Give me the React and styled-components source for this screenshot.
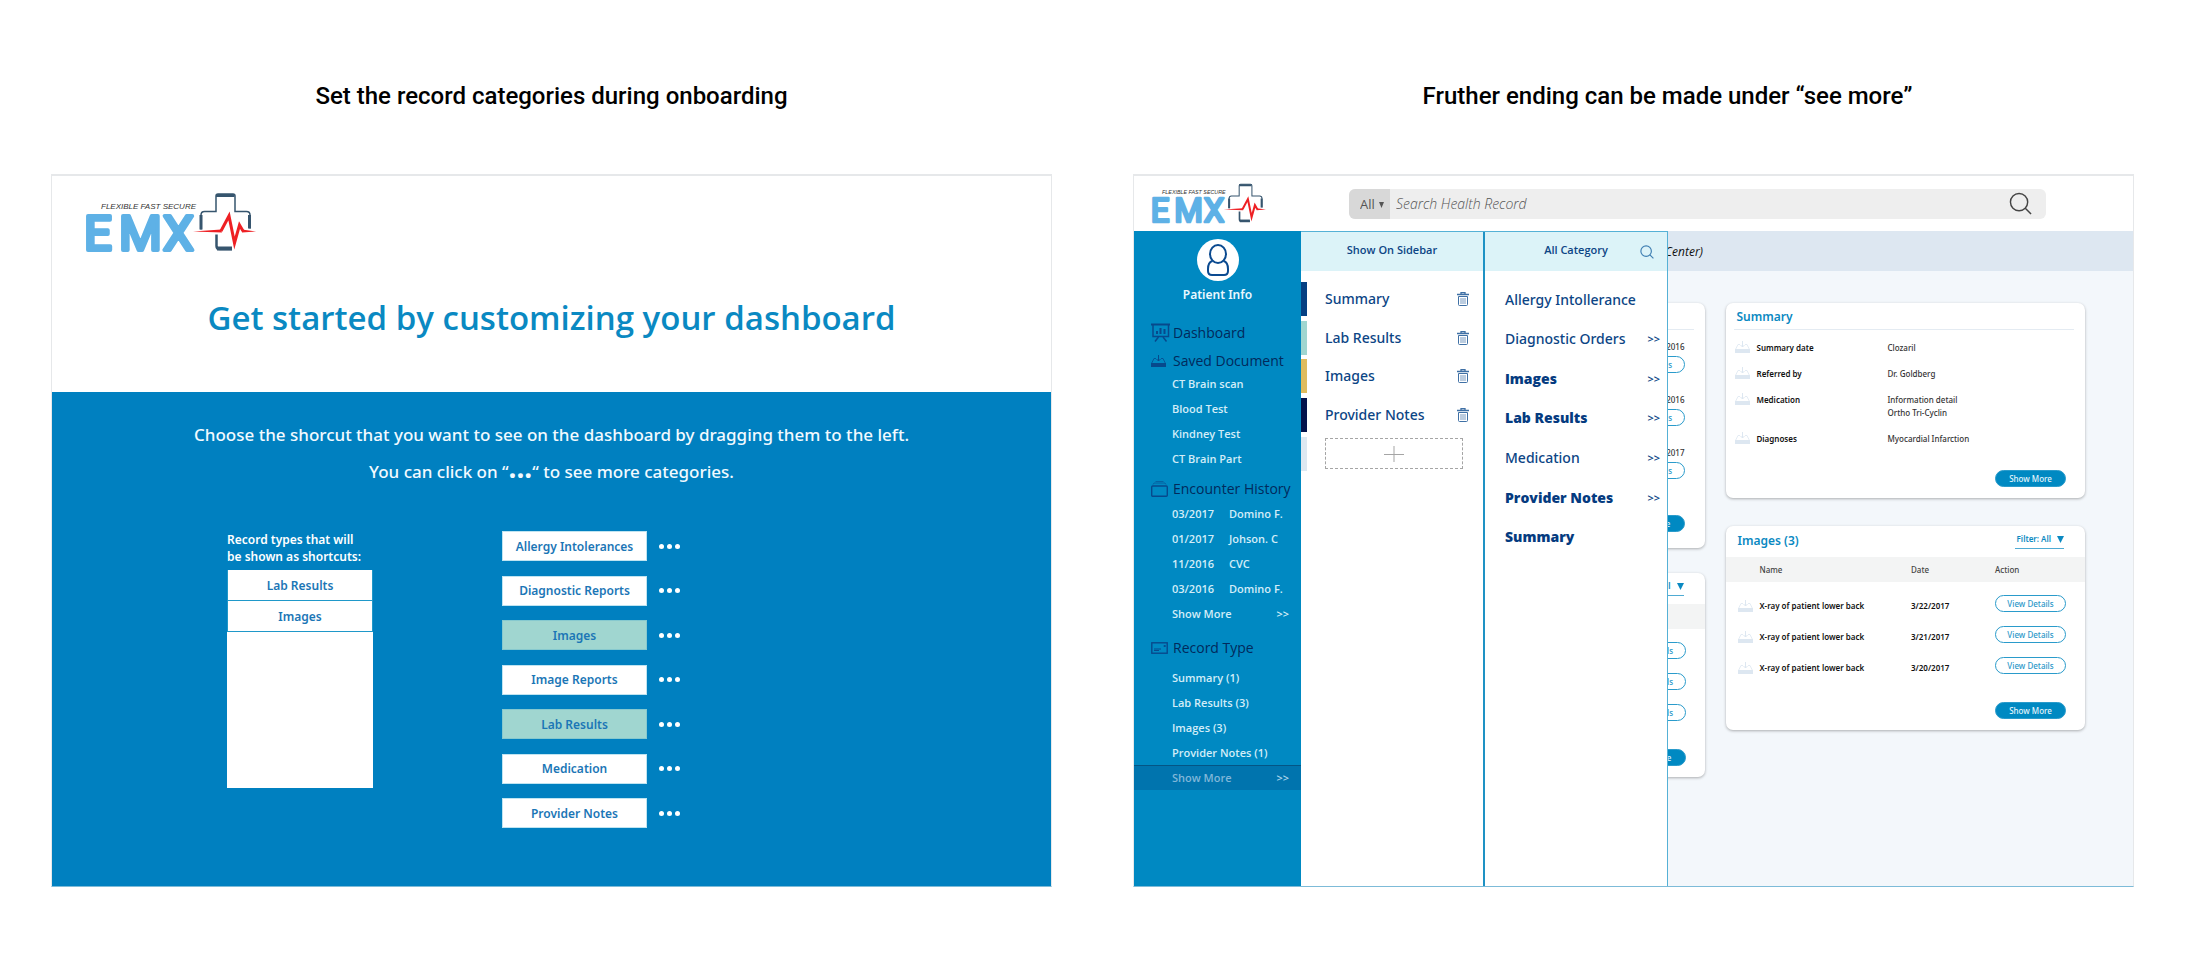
import React from "react";
import styled, { createGlobalStyle, css } from "styled-components";

const sans = `"Noto Sans", "Open Sans", sans-serif`;
const openSans = `"Open Sans", "Noto Sans", sans-serif`;

const color = {
  blue: "#0080c0",
  sidebar: "#0089c2",
  title: "#0a89c2",
  label: "#1b76b6",
  navy: "#0c4585",
  deepNavy: "#022a5c",
  mint: "#a0d6d0",
  ice: "#dcf3f8",
};

const GlobalStyle = createGlobalStyle`
  *, *::before, *::after { box-sizing: border-box; }
  body { margin: 0; background: #fff; font-family: ${sans}; color: #222; }
  h1, h2, h3, p, ul, dl, dd { margin: 0; padding: 0; }
  ul { list-style: none; }
  button, input, select { font: inherit; color: inherit; border: 0; margin: 0; padding: 0; background: none; }
  button { cursor: pointer; }
  a { color: inherit; text-decoration: none; }
  svg { display: block; }
`;

const Page = styled.main`
  display: grid;
  grid-template-columns: 1fr 1fr;
  gap: 81px;
  padding: 81px 63px 76px 51px;
`;

const Story = styled.section`
  display: flex;
  flex-direction: column;
  min-width: 0;
`;

const Caption = styled.h2`
  margin-bottom: 63px;
  padding-left: ${(p) => p.$indent || 0}px;
  font: 500 24px/30px Roboto, "Open Sans", sans-serif;
  color: #000;
  text-align: center;
`;

const Frame = styled.div`
  display: flex;
  flex-direction: column;
  flex: 1;
  border: 1px solid #e6e8ea;
  border-top-width: 2px;
  border-bottom-color: #7dbbd8;
`;

/* ---------- Logo ---------- */

const LogoSvg = styled.svg`
  width: ${(p) => p.$width}px;
  height: auto;
  flex: none;
  overflow: visible;
`;

function Logo({ width }) {
  return (
    <LogoSvg $width={width} viewBox="0 0 170 60" role="img" aria-label="EMX">
      <text x="15" y="17" fontFamily="Liberation Sans, sans-serif" fontStyle="italic" fontSize="8" fill="#333">
        FLEXIBLE FAST SECURE
      </text>
      <text
        x="-2 33 77"
        y="58"
        fontFamily="Roboto, sans-serif"
        fontSize="49"
        fill="#5eb1e6"
        stroke="#5eb1e6"
        strokeWidth="4"
        strokeLinejoin="round"
      >
        EMX
      </text>
      <g fill="none" stroke="#36556e">
        <path d="M115 37.500V23q0-3.500 3.500-3.500H130V4q0-2 2-2h15q2 0 2 2v15.500h11.500q3.500 0 3.500 3.500v13.500" strokeWidth="1.500" />
        <path d="M115 37.500V23M163.500 36.500V23M130 3.500h18.500" strokeWidth="3" />
        <path d="M130.500 42.500V54q0 3 3 3H146" strokeWidth="2.500" />
        <path d="M131 56.500h15" strokeWidth="4" />
      </g>
      <g fill="#ee2024">
        <path d="M107 39.500L135 37.500L136 40.500ZM156 37.500L170 39.500L156 40.500Z" />
        <path
          d="M135 39L143 24L148.500 51L153.500 33L157 39"
          fill="none"
          stroke="#ee2024"
          strokeWidth="3"
          strokeMiterlimit="8"
        />
      </g>
    </LogoSvg>
  );
}

/* ---------- Icons ---------- */

function SearchIcon({ size, weight }) {
  return (
    <svg width={size} height={size} viewBox="0 0 24 24" fill="none" stroke="currentColor" strokeWidth={weight}>
      <circle cx="10.500" cy="10.500" r="9" />
      <path d="M17 17L23 23" />
    </svg>
  );
}

function TrayIcon({ width = 15 }) {
  return (
    <svg width={width} height="12" viewBox="0 0 15 12" fill="none" stroke="currentColor">
      <path d="M.5 8.500L3 3.500H5M10 3.500H12L14.500 8.500" opacity=".8" />
      <path d="M7.500 0V6M5.500 4L7.500 6L9.500 4" />
      <path d="M0 8H15V12H0Z" fill="currentColor" stroke="none" />
    </svg>
  );
}

function TrashIcon() {
  return (
    <svg width="12" height="14" viewBox="0 0 12 14" fill="none" stroke="currentColor">
      <path d="M0 2.500H12M4 2V.5H8V2" strokeWidth="1.300" />
      <path d="M1.500 4.500V12.500Q1.500 13.500 2.500 13.500H9.500Q10.500 13.500 10.500 12.500V4.500Z" />
      <path d="M4 6V12M6 6V12M8 6V12" opacity=".7" />
    </svg>
  );
}

function PersonIcon() {
  return (
    <svg width="24" height="32" viewBox="0 0 24 32" fill="none" stroke="#0b4a90" strokeWidth="2">
      <path d="M6.500 17C3 18 2 21 2 25V27Q2 31 6 31H18Q22 31 22 27V25C22 21 21 18 17.500 17" />
      <ellipse cx="12" cy="10" rx="8" ry="9" />
    </svg>
  );
}

function BoardIcon() {
  return (
    <svg width="20" height="20" viewBox="0 0 20 20" fill="none" stroke="currentColor">
      <path d="M0 1.500H19" strokeWidth="2" />
      <path d="M2 2V13.500H17.500V2" strokeWidth="1.500" />
      <path d="M6 11V8M9.500 11V5M13.500 11V6" strokeWidth="2" />
      <path d="M7.500 14L4 18.500M12 14L15.500 18.500" strokeWidth="1.500" />
    </svg>
  );
}

function FolderIcon() {
  return (
    <svg width="17" height="16" viewBox="0 0 17 16" fill="none" stroke="currentColor">
      <rect x=".7" y="5" width="15.600" height="10.300" rx="1" strokeWidth="1.400" />
      <path d="M2 3.500L3 2H14L15 3.500M4.500 .5H12.500" opacity=".6" />
    </svg>
  );
}

function CardIcon() {
  return (
    <svg width="17" height="12" viewBox="0 0 17 12" fill="none" stroke="currentColor">
      <rect x=".8" y=".8" width="15.400" height="10.400" strokeWidth="1.400" />
      <path d="M3 7H10M3 8.500H8M12.500 4H15M13.700 3V5" />
    </svg>
  );
}

/* ---------- Onboarding ---------- */

const OnboardingHeader = styled.header`
  height: 216px;
  padding: 16px 34px 0;
`;

const OnboardingTitle = styled.h1`
  margin-top: 44px;
  font: 600 33px/44px ${openSans};
  color: ${color.title};
  text-align: center;
`;

const OnboardingBody = styled.div`
  flex: 1;
  padding: 24px 0 58px;
  background: ${color.blue};
  color: #fff;
`;

const Intro = styled.p`
  font: 500 17px/37px ${sans};
  color: #f2faff;
  text-align: center;
  b {
    font-size: 28px;
    line-height: 0;
  }
`;

const Picker = styled.div`
  display: flex;
  gap: 129px;
  margin-top: 41px;
  padding-left: 175px;
  font: 600 12px/17px ${sans};
`;

const ShortcutColumn = styled.div`
  width: 146px;
`;

const ShortcutLabel = styled.h3`
  margin-bottom: 5px;
  font: inherit;
  white-space: nowrap;
`;

const ShortcutBox = styled.ul`
  height: 218px;
  background: #fff;
`;

const Shortcut = styled.li`
  display: flex;
  align-items: center;
  justify-content: center;
  height: 31px;
  border: 1px solid #1f98c9;
  border-top: 0;
  color: ${color.label};
`;

const RecordList = styled.ul`
  display: flex;
  flex-direction: column;
  justify-content: space-between;
  height: 297px;
`;

const RecordItem = styled.li`
  display: flex;
  align-items: center;
  gap: 12px;
`;

const RecordButton = styled.button`
  width: 145px;
  height: 30px;
  border: 1px solid ${(p) => (p.$picked ? "#86c9cf" : "#bfe4f1")};
  background: ${(p) => (p.$picked ? color.mint : "#fff")};
  color: ${color.label};
`;

const MoreButton = styled.button`
  display: flex;
  gap: 3px;
  i {
    width: 5px;
    height: 5px;
    border-radius: 50%;
    background: #fff;
  }
`;

const records = [
  ["Allergy Intolerances"],
  ["Diagnostic Reports"],
  ["Images", true],
  ["Image Reports"],
  ["Lab Results", true],
  ["Medication"],
  ["Provider Notes"],
];

function Onboarding() {
  return (
    <Frame>
      <OnboardingHeader>
        <Logo width={170} />
        <OnboardingTitle>Get started by customizing your dashboard</OnboardingTitle>
      </OnboardingHeader>
      <OnboardingBody>
        <Intro>Choose the shorcut that you want to see on the dashboard by dragging them to the left.</Intro>
        <Intro>
          You can click on “<b>...</b>“ to see more categories.
        </Intro>
        <Picker>
          <ShortcutColumn>
            <ShortcutLabel>
              Record types that will
              <br />
              be shown as shortcuts:
            </ShortcutLabel>
            <ShortcutBox>
              <Shortcut>Lab Results</Shortcut>
              <Shortcut>Images</Shortcut>
            </ShortcutBox>
          </ShortcutColumn>
          <RecordList>
            {records.map(([name, picked]) => (
              <RecordItem key={name}>
                <RecordButton $picked={picked}>{name}</RecordButton>
                <MoreButton aria-label={`More ${name}`}>
                  <i />
                  <i />
                  <i />
                </MoreButton>
              </RecordItem>
            ))}
          </RecordList>
        </Picker>
      </OnboardingBody>
    </Frame>
  );
}

/* ---------- Dashboard: top bar ---------- */

const TopBar = styled.header`
  display: flex;
  align-items: center;
  gap: 83px;
  height: 55px;
  padding: 0 87px 0 18px;
`;

const SearchForm = styled.form`
  display: flex;
  align-items: center;
  flex: 1;
  height: 30px;
  border-radius: 6px;
  background: #eeeeee;
  overflow: hidden;
  color: #555;
`;

const Scope = styled.label`
  position: relative;
  width: 41px;
  height: 30px;
  background: #d8d8d8;
  select {
    appearance: none;
    width: 100%;
    height: 100%;
    padding-left: 11px;
    font: 400 13px ${openSans};
  }
  svg {
    position: absolute;
    right: 6px;
    top: 13px;
    pointer-events: none;
  }
`;

const SearchInput = styled.input`
  flex: 1;
  min-width: 0;
  padding-left: 6px;
  font: italic 300 14px ${openSans};
  &::placeholder {
    color: #555;
    opacity: 1;
  }
`;

const SearchButton = styled.button`
  margin-right: 14px;
  color: #444;
`;

/* ---------- Dashboard: sidebar ---------- */

const Workspace = styled.div`
  display: grid;
  grid-template-columns: 167px 1fr;
  flex: 1;
`;

const Sidebar = styled.nav`
  padding-top: 8px;
  background: ${color.sidebar};
  color: #d3edf8;
`;

const Patient = styled.a`
  display: flex;
  flex-direction: column;
  align-items: center;
  gap: 5px;
  margin-bottom: 19px;
  font: 600 12px/18px ${sans};
  color: #eaf8ff;
`;

const Avatar = styled.span`
  display: grid;
  place-items: center;
  width: 42px;
  height: 42px;
  border-radius: 50%;
  background: #fff;
`;

const NavHeading = styled.h3`
  display: grid;
  grid-template-columns: 20px auto;
  align-items: center;
  gap: 2px;
  margin-top: ${(p) => p.$top || 0}px;
  margin-bottom: ${(p) => p.$bottom || 0}px;
  padding-left: 17px;
  font: 400 14px/20px ${openSans};
  color: ${color.deepNavy};
  white-space: nowrap;
  svg {
    color: #07498c;
  }
`;

const NavItem = styled.a`
  display: flex;
  height: 25px;
  padding: 0 12px 0 38px;
  font: 600 11px/25px ${openSans};
  white-space: nowrap;
  ${(p) =>
    p.$active &&
    css`
      background: #0074ae;
      box-shadow: inset 0 1px #045585;
      color: #80b7d9;
    `}
`;

const VisitDate = styled.span`
  width: 57px;
`;

const Chevrons = styled.span`
  margin-left: auto;
  font-family: ${sans};
  font-size: 11px;
  font-weight: 600;
  color: ${(p) => p.$tone || "inherit"};
`;

const savedDocuments = ["CT Brain scan", "Blood Test", "Kindney Test", "CT Brain Part"];
const encounters = [
  ["03/2017", "Domino F."],
  ["01/2017", "Johson. C"],
  ["11/2016", "CVC"],
  ["03/2016", "Domino F."],
];
const recordTypes = ["Summary (1)", "Lab Results (3)", "Images (3)", "Provider Notes (1)"];

function SideNav() {
  return (
    <Sidebar>
      <Patient href="#patient">
        <Avatar>
          <PersonIcon />
        </Avatar>
        Patient Info
      </Patient>
      <NavHeading>
        <BoardIcon />
        Dashboard
      </NavHeading>
      <NavHeading $top={8}>
        <TrayIcon />
        Saved Document
      </NavHeading>
      {savedDocuments.map((name) => (
        <NavItem key={name} href="#document">
          {name}
        </NavItem>
      ))}
      <NavHeading $top={8} $bottom={2}>
        <FolderIcon />
        Encounter History
      </NavHeading>
      {encounters.map(([date, name]) => (
        <NavItem key={date} href="#encounter">
          <VisitDate>{date}</VisitDate>
          {name}
        </NavItem>
      ))}
      <NavItem href="#encounters">
        Show More <Chevrons>&gt;&gt;</Chevrons>
      </NavItem>
      <NavHeading $top={12} $bottom={7}>
        <CardIcon />
        Record Type
      </NavHeading>
      {recordTypes.map((name) => (
        <NavItem key={name} href="#record">
          {name}
        </NavItem>
      ))}
      <NavItem href="#records" $active>
        Show More <Chevrons $tone="#a9d3ea">&gt;&gt;</Chevrons>
      </NavItem>
    </Sidebar>
  );
}

/* ---------- Dashboard: category flyout ---------- */

const Flyout = styled.div`
  position: absolute;
  inset: 0 auto 0 0;
  display: grid;
  grid-template-columns: 184px 182px;
  border: 1px solid #55b1d6;
  border-left: 0;
  border-bottom: 0;
  background: #fff;
  color: ${color.navy};
`;

const Panel = styled.section`
  & + & {
    border: 0;
  }
  border-right: 2px solid #1e92c4;
`;

const PanelHeader = styled.header`
  display: grid;
  grid-template-columns: 1fr auto 1fr;
  align-items: center;
  height: 39px;
  padding: 0 13px;
  background: ${color.ice};
  h3 {
    grid-column: 2;
    font: 600 11px/16px ${openSans};
    padding-bottom: 3px;
  }
  button {
    justify-self: end;
    color: #3f7fb2;
  }
`;

const PanelList = styled.ul`
  display: grid;
  grid-auto-rows: 1fr;
  height: ${(p) => p.$height}px;
  margin-top: 9px;
`;

const ShownRow = styled.li`
  display: grid;
  grid-template-columns: 6px 1fr auto;
  align-items: center;
  gap: 18px;
  padding-right: 13px;
  font: 500 14px/20px ${sans};
  button {
    color: #3f70a5;
  }
`;

const Stripe = styled.span`
  height: 34px;
  background: ${(p) => p.$fill};
`;

const RemoveButton = styled.button`
  margin-right: 12px;
`;

const AddSlot = styled.button`
  display: grid;
  place-items: center;
  width: 138px;
  height: 31px;
  border: 1px dashed #a5a5a5;
`;

const CategoryRow = styled.li`
  display: flex;
  align-items: center;
  padding: 0 7px 0 20px;
  font: 500 14px/20px ${sans};
  white-space: nowrap;
  ${(p) =>
    p.$strong &&
    css`
      font: 800 14px/20px ${openSans};
      color: #053b80;
    `}
`;

const shown = [
  ["Summary", "#053f82"],
  ["Lab Results", color.mint],
  ["Images", "#dfbc5e"],
  ["Provider Notes", "#02124a"],
];

const categories = [
  { name: "Allergy Intollerance" },
  { name: "Diagnostic Orders", more: true },
  { name: "Images", more: true, strong: true },
  { name: "Lab Results", more: true, strong: true },
  { name: "Medication", more: true },
  { name: "Provider Notes", more: true, strong: true },
  { name: "Summary", strong: true },
];

function CategoryFlyout() {
  return (
    <Flyout>
      <Panel>
        <PanelHeader>
          <h3>Show On Sidebar</h3>
        </PanelHeader>
        <PanelList $height={193}>
          {shown.map(([name, fill]) => (
            <ShownRow key={name}>
              <Stripe $fill={fill} />
              {name}
              <RemoveButton aria-label={`Remove ${name}`}>
                <TrashIcon />
              </RemoveButton>
            </ShownRow>
          ))}
          <ShownRow>
            <Stripe $fill="#dde8f1" />
            <AddSlot aria-label="Add category">
              <svg width="20" height="16" viewBox="0 0 20 16" stroke="#a5a5a5">
                <path d="M0 8.500H20M10 0V16" />
              </svg>
            </AddSlot>
          </ShownRow>
        </PanelList>
      </Panel>
      <Panel>
        <PanelHeader>
          <h3>All Category</h3>
          <button aria-label="Search categories">
            <SearchIcon size={14} weight={2} />
          </button>
        </PanelHeader>
        <PanelList $height={277}>
          {categories.map((c) => (
            <CategoryRow key={c.name} $strong={c.strong}>
              {c.name}
              {c.more && <Chevrons $tone={color.navy}>&gt;&gt;</Chevrons>}
            </CategoryRow>
          ))}
        </PanelList>
      </Panel>
    </Flyout>
  );
}

/* ---------- Dashboard: cards ---------- */

const Content = styled.div`
  position: relative;
  background: #f3f7fb;
  min-width: 0;
`;

const LocationBar = styled.p`
  height: 40px;
  padding-left: 364px;
  background: #dde7f1;
  font: italic 400 12px/41px ${openSans};
  color: #111;
`;

const Board = styled.div`
  display: grid;
  grid-template-columns: 1fr 1fr;
  gap: 21px;
  padding: 32px 48px 32px 44px;
`;

const Column = styled.div`
  display: flex;
  flex-direction: column;
  gap: ${(p) => p.$gap}px;
`;

const Card = styled.article`
  border-radius: 7px;
  background: #fff;
  box-shadow: 0 1px 3px rgba(0, 0, 0, 0.3);
  font: 500 8px/13px ${sans};
  color: #333;
`;

const CardTitle = styled.h3`
  font: 600 12px/18px ${sans};
  color: ${color.title};
`;

const RuledHeader = styled.header`
  display: flex;
  align-items: center;
  height: 27px;
  margin: 0 11px 0 8px;
  padding: 2px 0 0 3px;
  border-bottom: 1px solid #e4ebf2;
`;

const Pill = styled.button`
  display: block;
  width: 71px;
  height: 17px;
  border: 1px solid #2a9bcb;
  border-radius: 9px;
  background: ${(p) => (p.$solid ? color.sidebar : "#fff")};
  color: ${(p) => (p.$solid ? "#e4f5fc" : "#2b98c9")};
  line-height: 15px;
`;

const CardFooter = styled.footer`
  display: flex;
  justify-content: flex-end;
  padding: ${(p) => p.$top}px 19px 11px;
`;

const Facts = styled.dl`
  display: grid;
  grid-template-columns: 22px 131px 1fr;
  row-gap: 13px;
  padding: 11px 9px 0;
  svg {
    color: #dde7f1;
  }
  dt {
    font-weight: 600;
    color: #111;
  }
`;

const facts = [
  ["Summary date", "Clozaril"],
  ["Referred by", "Dr. Goldberg"],
  ["Medication", "Information detail", "Ortho Tri-Cyclin"],
  ["Diagnoses", "Myocardial Infarction"],
];

const Visits = styled.ul`
  display: flex;
  flex-direction: column;
  align-items: flex-end;
  gap: 20px;
  padding: 10px 20px 0;
  li {
    display: flex;
    flex-direction: column;
    align-items: flex-end;
    gap: 3px;
  }
`;

const VisitFooter = styled.footer`
  display: flex;
  justify-content: flex-end;
  padding: 36px 20px 16px;
`;

const ListHeader = styled.header`
  display: flex;
  align-items: center;
  justify-content: space-between;
  height: 31px;
  padding: 0 21px 2px 12px;
`;

const Filter = styled.button`
  display: flex;
  align-items: center;
  gap: 6px;
  margin-left: auto;
  padding: 0 0 2px 2px;
  border-bottom: 1px solid #4fabd3;
  font-weight: 600;
  line-height: 14px;
  color: ${color.title};
`;

const RecordTable = styled.table`
  width: 100%;
  table-layout: fixed;
  border-collapse: collapse;
  th,
  td {
    padding: 0;
    text-align: left;
  }
  thead th {
    height: 25px;
    background: #f3f4f4;
    font-weight: 500;
    color: #444;
  }
  thead::after {
    content: "";
    display: block;
    height: 6px;
  }
  tbody td {
    height: 31px;
    font-weight: 600;
    color: #111;
  }
  tbody td:not(:last-child) {
    padding-top: 4px;
  }
  tbody td:first-child {
    padding-left: 12px;
    color: #dde7f1;
  }
`;

const PillCell = styled.td`
  button {
    font-weight: 500;
  }
`;

function RecordCard({ title, headings, rows }) {
  return (
    <Card>
      <ListHeader>
        {title && <CardTitle>{title}</CardTitle>}
        <Filter>
          Filter: All
          <svg width="7" height="7" viewBox="0 0 7 7" fill="currentColor">
            <path d="M0 0H7L3.500 7Z" />
          </svg>
        </Filter>
      </ListHeader>
      <RecordTable>
        <colgroup>
          <col width="34" />
          <col />
          <col width="84" />
          <col width="90" />
        </colgroup>
        <thead>
          <tr>
            <th />
            {headings.map((h, i) => (
              <th key={i}>{h}</th>
            ))}
          </tr>
        </thead>
        <tbody>
          {rows.map(([name, date], i) => (
            <tr key={i}>
              <td>
                <TrayIcon />
              </td>
              <td>{name}</td>
              <td>{date}</td>
              <PillCell>
                <Pill>View Details</Pill>
              </PillCell>
            </tr>
          ))}
        </tbody>
      </RecordTable>
      <CardFooter $top={21}>
        <Pill $solid>Show More</Pill>
      </CardFooter>
    </Card>
  );
}

const images = [
  ["X-ray of patient lower back", "3/22/2017"],
  ["X-ray of patient lower back", "3/21/2017"],
  ["X-ray of patient lower back", "3/20/2017"],
];

function Dashboard() {
  return (
    <Frame>
      <TopBar>
        <Logo width={114} />
        <SearchForm>
          <Scope>
            <select aria-label="Search scope">
              <option>All</option>
            </select>
            <svg width="5" height="6" viewBox="0 0 5 6" fill="#555">
              <path d="M0 0H5L2.500 6Z" />
            </svg>
          </Scope>
          <SearchInput aria-label="Search Health Record" placeholder="Search Health Record" />
          <SearchButton type="button" aria-label="Search">
            <SearchIcon size={23} weight={1.5} />
          </SearchButton>
        </SearchForm>
      </TopBar>
      <Workspace>
        <SideNav />
        <Content>
          <LocationBar>Center)</LocationBar>
          <Board>
            <Column $gap={25}>
              <Card>
                <RuledHeader />
                <Visits>
                  {["2016", "2016", "2017"].map((year, i) => (
                    <li key={i}>
                      {year}
                      <Pill>View Details</Pill>
                    </li>
                  ))}
                </Visits>
                <VisitFooter>
                  <Pill $solid>Show More</Pill>
                </VisitFooter>
              </Card>
              <RecordCard headings={["", "", ""]} rows={[[], [], []]} />
            </Column>
            <Column $gap={28}>
              <Card>
                <RuledHeader>
                  <CardTitle>Summary</CardTitle>
                </RuledHeader>
                <Facts>
                  {facts.map(([term, ...values]) => (
                    <React.Fragment key={term}>
                      <TrayIcon />
                      <dt>{term}</dt>
                      <dd>
                        {values.map((v) => (
                          <div key={v}>{v}</div>
                        ))}
                      </dd>
                    </React.Fragment>
                  ))}
                </Facts>
                <CardFooter $top={25}>
                  <Pill $solid>Show More</Pill>
                </CardFooter>
              </Card>
              <RecordCard title="Images (3)" headings={["Name", "Date", "Action"]} rows={images} />
            </Column>
          </Board>
          <CategoryFlyout />
        </Content>
      </Workspace>
    </Frame>
  );
}

export default function App() {
  return (
    <>
      <GlobalStyle />
      <Page>
        <Story>
          <Caption>Set the record categories during onboarding</Caption>
          <Onboarding />
        </Story>
        <Story>
          <Caption $indent={68}>Fruther ending can be made under “see more”</Caption>
          <Dashboard />
        </Story>
      </Page>
    </>
  );
}
